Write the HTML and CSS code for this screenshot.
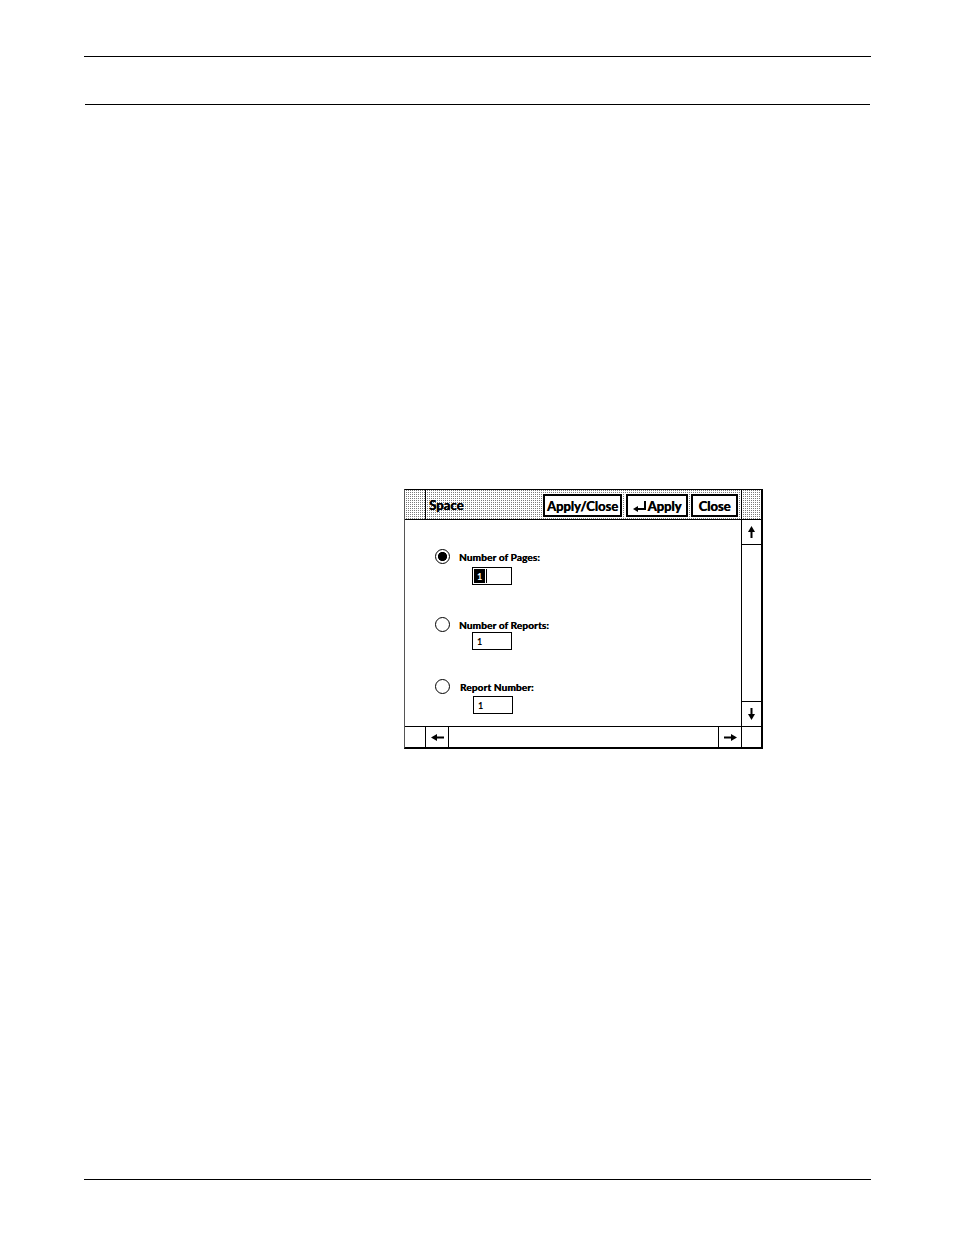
FILE: index.html
```html
<!DOCTYPE html>
<html>
<head>
<meta charset="utf-8">
<title>Space</title>
<link rel="stylesheet" href="styles.css">
</head>
<body>
<div class="page">
  <div class="rule rule-top"></div>
  <div class="rule rule-mid"></div>

  <div class="dialog">
    <div class="titlebar">
      <div class="tb-left stipple"></div>
      <div class="tb-main stipple">
        <span class="title">Space</span>
        <div class="buttons">
          <span class="btn btn-applyclose">Apply/Close</span>
          <span class="btn btn-apply"><svg class="ret" width="14" height="11" viewBox="0 0 14 11"><path d="M0 8 L5 5 L5 11 Z" fill="#000"/><rect x="4" y="7" width="9" height="2" fill="#000"/><rect x="11" y="0" width="2" height="9" fill="#000"/></svg>Apply</span>
          <span class="btn btn-close">Close</span>
        </div>
      </div>
      <div class="tb-right stipple"></div>
    </div>

    <div class="body">
      <div class="content">
        <div class="option opt1">
          <div class="row"><span class="radio on"></span><span class="label">Number of Pages:</span></div>
          <div class="field fld1"><span class="cursor">1</span></div>
        </div>
        <div class="option opt2">
          <div class="row"><span class="radio"></span><span class="label">Number of Reports:</span></div>
          <div class="field fld2"><span class="val">1</span></div>
        </div>
        <div class="option opt3">
          <div class="row"><span class="radio"></span><span class="label lbl3">Report Number:</span></div>
          <div class="field fld3"><span class="val">1</span></div>
        </div>
      </div>
      <div class="vscroll">
        <div class="sbox sbox-up"><svg width="7" height="12" viewBox="0 0 7 12"><path d="M3.5 0 L7 6 L0 6 Z" fill="#000"/><rect x="2.5" y="5" width="2" height="7" fill="#000"/></svg></div>
        <div class="vtrack"></div>
        <div class="sbox sbox-down"><svg width="7" height="12" viewBox="0 0 7 12"><path d="M3.5 12 L7 6 L0 6 Z" fill="#000"/><rect x="2.5" y="0" width="2" height="7" fill="#000"/></svg></div>
      </div>
    </div>

    <div class="hbar">
      <div class="hcell hcell-blank"></div>
      <div class="hcell hcell-arrow hcell-left"><svg width="13" height="7" viewBox="0 0 13 7"><path d="M0 3.5 L6 0 L6 7 Z" fill="#000"/><rect x="5" y="2.5" width="8" height="2" fill="#000"/></svg></div>
      <div class="htrack"></div>
      <div class="hcell hcell-arrow hcell-right"><svg width="13" height="7" viewBox="0 0 13 7"><path d="M13 3.5 L7 0 L7 7 Z" fill="#000"/><rect x="0" y="2.5" width="8" height="2" fill="#000"/></svg></div>
      <div class="hcell hcell-corner"></div>
    </div>
  </div>

  <div class="rule rule-bottom"></div>
</div>
</body>
</html>
```

FILE: styles.css
```css
html, body {
  margin: 0;
  padding: 0;
  background: #fff;
}

body {
  font-family: Lato, "Open Sans", "DejaVu Sans", sans-serif;
  color: #000;
}

.page {
  width: 954px;
  padding-top: 56px;
  padding-bottom: 55px;
}

.rule {
  height: 1px;
  background: #000;
}

.rule-top {
  margin-left: 84px;
  width: 787px;
}

.rule-mid {
  margin-top: 47px;
  margin-left: 85px;
  width: 785px;
}

.rule-bottom {
  margin-top: 430px;
  margin-left: 84px;
  width: 787px;
}

/* Dialog window */
.dialog {
  box-sizing: border-box;
  margin-top: 384px;
  margin-left: 404px;
  width: 359px;
  height: 260px;
  border-left: 1px solid #555;
  border-top: 1px solid #000;
  border-right: 2px solid #000;
  border-bottom: 2px solid #000;
  display: flex;
  flex-direction: column;
  background: #fff;
}

.stipple {
  background-color: #fff;
  background-image: repeating-conic-gradient(#7a7a7a 0 25%, #fff 0 100%);
  background-size: 2px 2px;
}

.titlebar {
  box-sizing: border-box;
  height: 30px;
  border-bottom: 1px solid #000;
  display: flex;
}

.tb-left {
  box-sizing: border-box;
  width: 21px;
  border-right: 1px solid #000;
}

.tb-right {
  box-sizing: border-box;
  width: 20px;
  border-left: 1px solid #000;
}

.tb-main {
  flex: 1;
  display: flex;
  align-items: center;
  justify-content: space-between;
  padding: 0 3px 0 3px;
}

.title {
  font-size: 13px;
  font-weight: 700;
  letter-spacing: 0.1px;
  text-shadow: 0.4px 0 0 #000;
}

.buttons {
  display: flex;
  align-items: center;
  margin-top: 2px;
}

.btn {
  box-sizing: border-box;
  height: 23px;
  border: 2px solid #000;
  background: #fff;
  box-shadow: 0 0 0 1px #fff;
  display: flex;
  align-items: center;
  justify-content: center;
  font-size: 13px;
  font-weight: 700;
  white-space: nowrap;
  text-shadow: 0.4px 0 0 #000;
}

.btn-applyclose {
  width: 79px;
}

.btn-apply {
  width: 62px;
  margin-left: 4px;
}

.btn-close {
  width: 47px;
  margin-left: 3px;
}

.ret {
  margin-right: 1px;
  margin-top: 2px;
}

/* Body */
.body {
  flex: 1;
  display: flex;
  min-height: 0;
}

.content {
  flex: 1;
  padding: 29px 0 0 30px;
}

.option {
  display: flex;
  flex-direction: column;
}

.opt2 {
  margin-top: 32px;
}

.opt3 {
  margin-top: 29px;
}

.row {
  display: flex;
  align-items: center;
  height: 15px;
}

.radio {
  box-sizing: border-box;
  width: 15px;
  height: 15px;
  border: 1.5px solid #000;
  border-radius: 50%;
  background: #fff;
  flex: none;
}

.radio.on {
  background: radial-gradient(circle, #000 0 4.3px, #fff 4.8px);
}

.label {
  margin-left: 9px;
  font-size: 10px;
  font-weight: 700;
  letter-spacing: 0.15px;
  text-shadow: 0.3px 0 0 #000;
}

.lbl3 {
  margin-left: 10px;
}

.field {
  box-sizing: border-box;
  width: 40px;
  height: 18px;
  margin-left: 37px;
  border: 1px solid #000;
  display: flex;
  align-items: center;
  font-size: 9px;
  font-weight: 700;
}

.fld1 {
  margin-top: 3px;
}

.fld2 {
  margin-top: 0;
}

.fld3 {
  margin-top: 2px;
  margin-left: 38px;
}

.cursor {
  width: 11px;
  height: 14px;
  margin-left: 1px;
  background: #000;
  color: #fff;
  display: flex;
  align-items: center;
  justify-content: center;
  box-shadow: 1px 0 0 #fff, 2px 0 0 #000;
}

.val {
  padding-left: 4px;
}

/* Vertical scrollbar */
.vscroll {
  box-sizing: border-box;
  width: 20px;
  border-left: 1px solid #000;
  display: flex;
  flex-direction: column;
}

.sbox {
  box-sizing: border-box;
  height: 25px;
  display: flex;
  align-items: center;
  justify-content: center;
}

.sbox-up {
  border-bottom: 1px solid #000;
}

.sbox-down {
  border-top: 1px solid #000;
}

.vtrack {
  flex: 1;
}

/* Horizontal scrollbar */
.hbar {
  box-sizing: border-box;
  height: 21px;
  border-top: 1px solid #000;
  display: flex;
}

.hcell {
  box-sizing: border-box;
  display: flex;
  align-items: center;
  justify-content: center;
}

.hcell-blank {
  width: 21px;
  border-right: 1px solid #000;
}

.hcell-left {
  width: 23px;
  border-right: 1px solid #000;
}

.htrack {
  flex: 1;
}

.hcell-right {
  width: 23px;
  border-left: 1px solid #000;
}

.hcell-corner {
  width: 20px;
  border-left: 1px solid #000;
}
```
